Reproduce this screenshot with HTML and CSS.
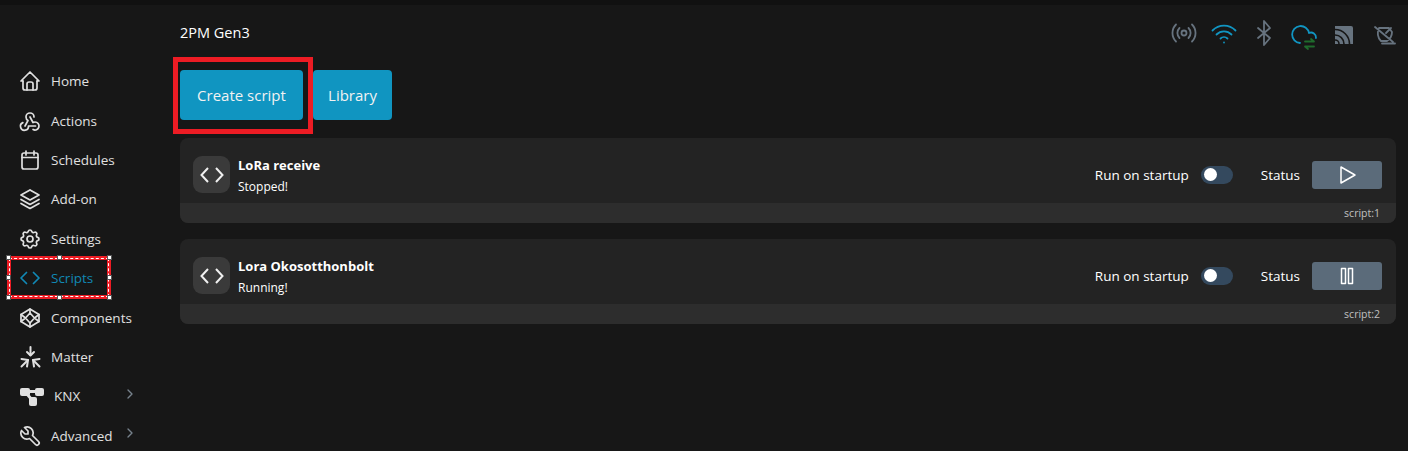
FILE: index.html
```html
<!DOCTYPE html>
<html lang="en">
<head>
    <meta charset="UTF-8">
    <title>2PM Gen3</title>
    <link rel="stylesheet" href="styles.css">
</head>
<body>
    <div class="topline"></div>
    <div class="app">
        <nav class="sidebar">
            <a class="nav-item">
                <svg class="nav-icon" viewBox="0 0 24 24"><path d="M5 12H3l9-9 9 9h-2"/><path d="M5 12v7a2 2 0 0 0 2 2h10a2 2 0 0 0 2-2v-7"/><path d="M9 21v-6a2 2 0 0 1 2-2h2a2 2 0 0 1 2 2v6"/></svg>
                Home
            </a>
            <a class="nav-item">
                <svg class="nav-icon" viewBox="0 0 24 24"><path d="M4.876 13.61A4 4 0 1 0 10.5 17h7"/><path d="M15.066 20.502a4 4 0 1 0 1.934-7.502c-.706 0-1.424.179-2 .5l-3-5.5"/><path d="M16 8a4 4 0 1 0-8 0c0 1.506.77 2.818 2 3.5l-3 5.5"/></svg>
                Actions
            </a>
            <a class="nav-item">
                <svg class="nav-icon" viewBox="0 0 24 24"><rect x="4" y="5" width="16" height="16" rx="2"/><path d="M16 3v4M8 3v4M4 9.500h16"/></svg>
                Schedules
            </a>
            <a class="nav-item">
                <svg class="nav-icon" viewBox="0 0 24 24"><path d="M12 3 3 8l9 5 9-5-9-5"/><path d="m3 12.500 9 5 9-5"/><path d="m3 16.500 9 5 9-5"/></svg>
                Add-on
            </a>
            <a class="nav-item">
                <svg class="nav-icon" viewBox="0 0 24 24"><path d="M10.325 4.317c.426-1.756 2.924-1.756 3.35 0a1.724 1.724 0 0 0 2.573 1.066c1.543-.94 3.31.826 2.37 2.37a1.724 1.724 0 0 0 1.065 2.572c1.756.426 1.756 2.924 0 3.35a1.724 1.724 0 0 0-1.066 2.573c.94 1.543-.826 3.31-2.37 2.37a1.724 1.724 0 0 0-2.572 1.065c-.426 1.756-2.924 1.756-3.35 0a1.724 1.724 0 0 0-2.573-1.066c-1.543.94-3.31-.826-2.37-2.37a1.724 1.724 0 0 0-1.065-2.572c-1.756-.426-1.756-2.924 0-3.35a1.724 1.724 0 0 0 1.066-2.573c-.94-1.543.826-3.31 2.37-2.37 1 .608 2.296.07 2.572-1.065"/><circle cx="12" cy="12" r="3"/></svg>
                Settings
            </a>
            <a class="nav-item active">
                <svg class="nav-icon" viewBox="0 0 24 24"><path d="M8.500 6.500 3 12l5.500 5.500"/><path d="M15.500 6.500 21 12l-5.500 5.500"/></svg>
                Scripts
                <span class="nav-select">
                    <i class="grip g1"></i><i class="grip g2"></i><i class="grip g3"></i><i class="grip g4"></i>
                    <i class="grip g5"></i><i class="grip g6"></i><i class="grip g7"></i><i class="grip g8"></i>
                </span>
            </a>
            <a class="nav-item">
                <svg class="nav-icon" viewBox="0 0 24 24"><path d="M3 15.500v-7L12 3l9 5.500v7L12 21z"/><path d="M12 3v4M12 17v4M3 8.500 7.500 12 3 15.500M21 8.500 16.500 12l4.500 3.500"/><path d="m12 7 4.500 5-4.500 5-4.500-5z"/></svg>
                Components
            </a>
            <a class="nav-item">
                <svg class="nav-icon matter" viewBox="0 0 24 24"><path d="M12.500 2v8"/><path d="m9 7 3.500 3.500L16 7"/><path d="M3.500 14 10 15l-1 6.500"/><path d="M3.500 21.500 10 15"/><path d="M21.500 14 15 15l1 6.500"/><path d="M21.500 21.500 15 15"/></svg>
                Matter
            </a>
            <a class="nav-item">
                <svg class="nav-icon knx" viewBox="0 0 27 24"><rect class="solid" x="2" y="4" width="10" height="8" rx="2"/><rect class="solid" x="17" y="4" width="9" height="8" rx="2"/><rect class="solid" x="11" y="13" width="8" height="9" rx="2"/><path class="thick" d="M10 7.500h9M9 10l5 6"/></svg>
                KNX
                <svg class="chevron" viewBox="0 0 24 24"><path d="m9 6 6 6-6 6"/></svg>
            </a>
            <a class="nav-item">
                <svg class="nav-icon" viewBox="0 0 24 24"><path d="M7 10h3V7L6.500 3.500a6 6 0 0 1 8 8l6 6a2 2 0 0 1-3 3l-6-6a6 6 0 0 1-8-8z"/></svg>
                Advanced
                <svg class="chevron" viewBox="0 0 24 24"><path d="m9 6 6 6-6 6"/></svg>
            </a>
        </nav>

        <main class="content">
            <header class="topbar">
                <div class="device-name">2PM Gen3</div>
                <div class="status-icons">
                    <svg viewBox="0 0 28 28" class="st-icon"><circle cx="14" cy="14" r="2.500"/><path d="M18.500 9a7 7 0 0 1 0 10M9.500 19a7 7 0 0 1 0-10M22 5.500a12 12 0 0 1 0 17M6 22.500a12 12 0 0 1 0-17"/></svg>
                    <svg viewBox="0 0 28 28" class="st-icon blue"><path d="M14 23.500h.01"/><path d="M10.500 19.500a5 5 0 0 1 7 0"/><path d="M6.500 15.500a10.500 10.500 0 0 1 15 0"/><path d="M2.500 11.500a16 16 0 0 1 23 0"/></svg>
                    <svg viewBox="0 0 28 28" class="st-icon"><path d="m8 9 12 10-6 7V2l6 7L8 19"/></svg>
                    <svg viewBox="0 0 28 28" class="st-icon"><path class="blue-line" d="M10 24A8.500 8.500 0 1 1 19 14a5 5 0 0 1 7 5"/><path class="green-line" d="M15 22.500h9l-3-2.500M24 27.500h-9l3 2.500"/></svg>
                    <svg viewBox="0 0 28 28" class="st-icon"><path class="fill-grey" d="M5 7h16a2 2 0 0 1 2 2v16H5z"/><path class="cut" d="M5 10.500A14.500 14.500 0 0 1 19.500 25M5 16a9 9 0 0 1 9 9M5 21a4 4 0 0 1 4 4"/></svg>
                    <svg viewBox="0 0 28 28" class="st-icon"><path d="m5 8 18 15M12 24.500h13M9 9h10l3 4c0 4-2 7-5 9h-6c-3-3-4-8-2-13z"/><path d="m16 14 5-5"/></svg>
                </div>
            </header>

            <div class="actions">
                <span class="btn-mark"><button class="btn btn-create">Create script</button></span>
                <button class="btn btn-library">Library</button>
            </div>

            <section class="script-card">
                <div class="script-main">
                    <div class="script-icon"><svg viewBox="0 0 24 24"><path d="M8 5l-6.500 7L8 19"/><path d="M16 5l6.500 7L16 19"/></svg></div>
                    <div class="script-info">
                        <h3>LoRa receive</h3>
                        <p>Stopped!</p>
                    </div>
                    <span class="label">Run on startup</span>
                    <span class="toggle"></span>
                    <span class="label status-label">Status</span>
                    <button class="run-btn"><svg viewBox="0 0 24 24"><path d="M6 4v16l14-8z"/></svg></button>
                </div>
                <div class="script-foot">script:1</div>
            </section>

            <section class="script-card">
                <div class="script-main">
                    <div class="script-icon"><svg viewBox="0 0 24 24"><path d="M8 5l-6.500 7L8 19"/><path d="M16 5l6.500 7L16 19"/></svg></div>
                    <div class="script-info">
                        <h3>Lora Okosotthonbolt</h3>
                        <p>Running!</p>
                    </div>
                    <span class="label">Run on startup</span>
                    <span class="toggle"></span>
                    <span class="label status-label">Status</span>
                    <button class="run-btn"><svg viewBox="0 0 24 24"><rect x="6.500" y="4.500" width="4" height="15"/><rect x="13.500" y="4.500" width="4" height="15"/></svg></button>
                </div>
                <div class="script-foot">script:2</div>
            </section>
        </main>
    </div>
</body>
</html>
```

FILE: styles.css
```css
* {
    margin: 0;
    padding: 0;
    box-sizing: border-box;
    font-family: "Open Sans", "Noto Sans", sans-serif;
}

html, body {
    height: 451px;
    overflow: hidden;
}

body {
    background-color: #171717;
    color: #fff;
}

svg {
    fill: none;
    stroke: currentColor;
    stroke-width: 2;
    stroke-linecap: round;
    stroke-linejoin: round;
}

.topline {
    height: 5px;
    background-color: #111;
}

.app {
    display: flex;
}

/* sidebar */
.sidebar {
    width: 180px;
    flex-shrink: 0;
    padding: 56.6px 0 0 18px;
    display: flex;
    flex-direction: column;
}

.nav-item {
    position: relative;
    height: 39.4px;
    flex-shrink: 0;
    display: flex;
    align-items: center;
    gap: 9px;
    font-size: 13.5px;
    color: #e0e0e0;
}

.nav-icon {
    width: 24px;
    height: 24px;
    flex-shrink: 0;
    stroke-width: 1.7;
}

.nav-icon.knx {
    width: 27px;
}

.nav-icon.matter {
    stroke-width: 2;
}

.nav-item.active {
    color: #1188b5;
}

.nav-item .chevron {
    position: absolute;
    left: 104px;
    top: 9px;
    width: 16px;
    height: 16px;
    color: #77828c;
    stroke-width: 2;
}

.solid {
    fill: currentColor;
    stroke: none;
}

.thick {
    stroke-width: 3;
}

/* editor selection marker around Scripts */
.nav-select {
    position: absolute;
    left: -11px;
    top: -3px;
    width: 104px;
    height: 43px;
    border: 4px solid #ed1c24;
    outline: 1px dashed #fff;
    outline-offset: -3px;
}

.grip {
    position: absolute;
    width: 5px;
    height: 5px;
    background-color: #fff;
    border: 1px solid #555;
}

.g1 { left: -5px; top: -5px; }
.g2 { left: 46px; top: -5px; }
.g3 { right: -5px; top: -5px; }
.g4 { left: -5px; top: 15px; }
.g5 { right: -5px; top: 15px; }
.g6 { left: -5px; bottom: -5px; }
.g7 { left: 46px; bottom: -5px; }
.g8 { right: -5px; bottom: -5px; }

/* main column */
.content {
    flex: 1;
    padding-right: 12px;
}

.topbar {
    height: 55px;
    display: flex;
    justify-content: space-between;
    align-items: center;
}

.device-name {
    font-size: 14.5px;
}

.status-icons {
    display: flex;
    align-items: center;
    gap: 12px;
    margin-right: -2px;
}

.st-icon {
    width: 28px;
    height: 28px;
    color: #67737f;
    stroke-width: 1.8;
    overflow: visible;
}

.st-icon.blue {
    color: #1195c2;
}

.blue-line {
    stroke: #1195c2;
}

.green-line {
    stroke: #1f6b2c;
}

.fill-grey {
    fill: #67737f;
    stroke: none;
}

.cut {
    stroke: #171717;
    stroke-width: 1.6;
}

.actions {
    display: flex;
    align-items: center;
    gap: 10px;
    height: 50px;
    margin: 10px 0 18px;
}

.btn {
    display: block;
    height: 50px;
    background-color: #1095c1;
    color: #f2f2f2;
    border: none;
    border-radius: 4px;
    font-size: 15px;
}

.btn-create {
    width: 123px;
}

.btn-library {
    width: 79px;
}

.btn-mark {
    display: block;
    position: relative;
    height: 50px;
}

.btn-mark::after {
    content: "";
    position: absolute;
    left: -7px;
    top: -13px;
    right: -10px;
    bottom: -14px;
    border: 5px solid #ed1c24;
}

/* script cards */
.script-card {
    background-color: #232323;
    border-radius: 8px;
    overflow: hidden;
    margin-bottom: 16px;
}

.script-main {
    height: 65px;
    display: flex;
    align-items: center;
    padding: 8px 14px 0 13px;
}

.script-icon {
    width: 37px;
    height: 37px;
    border-radius: 9px;
    background-color: #3a3a3a;
    color: #f0f0f0;
    display: flex;
    align-items: center;
    justify-content: center;
    margin-right: 8px;
}

.script-icon svg {
    width: 24px;
    height: 24px;
    stroke-width: 2;
    stroke-linecap: butt;
    stroke-linejoin: miter;
}

.script-info {
    flex: 1;
    padding-top: 2px;
}

.script-info h3 {
    font-size: 13px;
    font-weight: 700;
    margin-bottom: 5px;
    line-height: 18px;
}

.script-info p {
    font-size: 12px;
    line-height: 16px;
}

.label {
    font-size: 13.5px;
}

.toggle {
    position: relative;
    width: 32px;
    height: 18px;
    border-radius: 9px;
    background-color: #34495e;
    margin: 0 28px 0 12px;
}

.toggle::after {
    content: "";
    position: absolute;
    left: 3px;
    top: 2.500px;
    width: 13px;
    height: 13px;
    border-radius: 50%;
    background-color: #fff;
}

.status-label {
    margin-right: 12px;
}

.run-btn {
    width: 70px;
    height: 28px;
    border: none;
    border-radius: 3px;
    background-color: #5b6b7a;
    color: #fff;
    display: flex;
    align-items: center;
    justify-content: center;
}

.run-btn svg {
    width: 24px;
    height: 24px;
    stroke-width: 1.5;
}

.script-foot {
    height: 20px;
    background-color: #2d2d2d;
    font-size: 10.5px;
    color: #c0c0c0;
    text-align: right;
    line-height: 20px;
    padding-right: 16px;
}
```
